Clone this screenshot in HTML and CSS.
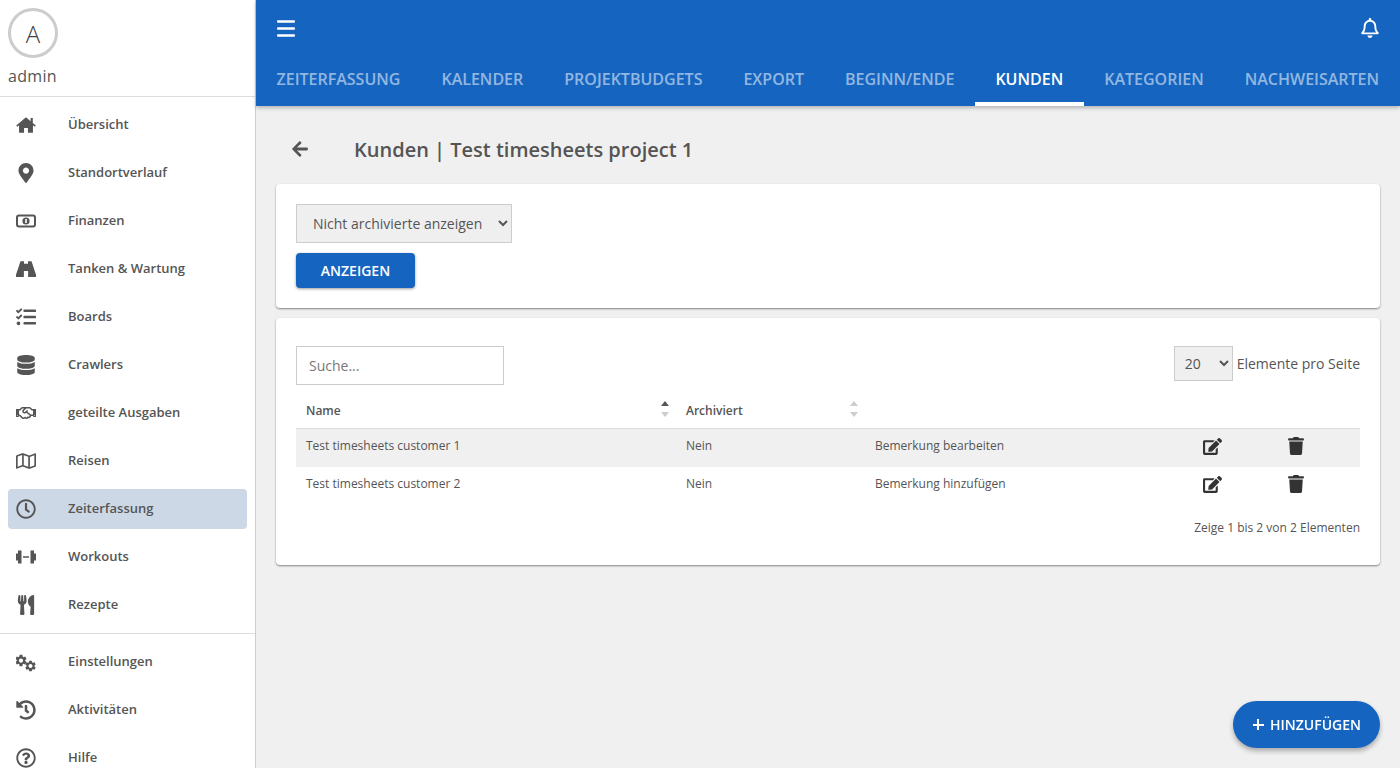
FILE: index.html
```html
<!DOCTYPE html>
<html lang="de">
<head>
<meta charset="UTF-8">
<meta name="viewport" content="width=device-width, initial-scale=1.0">
<title>Kunden</title>
<link rel="stylesheet" href="styles.css">
</head>
<body>

<svg class="sprite" xmlns="http://www.w3.org/2000/svg">
    <symbol id="i-edit" viewBox="0 0 576 512"><path d="M402.6 83.2l90.2 90.2c3.8 3.8 3.8 10 0 13.8L274.4 405.6l-92.8 10.3c-12.4 1.4-22.9-9.1-21.5-21.5l10.3-92.8L388.8 83.2c3.8-3.8 10-3.8 13.8 0zm162-22.9l-48.8-48.8c-15.2-15.2-39.9-15.2-55.2 0l-35.4 35.4c-3.8 3.8-3.8 10 0 13.8l90.2 90.2c3.8 3.8 10 3.8 13.8 0l35.4-35.4c15.2-15.3 15.2-40 0-55.2zM384 346.2V448H64V128h229.8c3.2 0 6.2-1.3 8.5-3.5l40-40c7.6-7.6 2.2-20.5-8.5-20.5H48C21.5 64 0 85.5 0 112v352c0 26.5 21.5 48 48 48h352c26.5 0 48-21.5 48-48V306.2c0-10.7-12.9-16-20.5-8.5l-40 40c-2.2 2.3-3.5 5.3-3.5 8.5z"/></symbol>
    <symbol id="i-trash" viewBox="0 0 448 512"><path d="M432 32H312l-9.4-18.7A24 24 0 0 0 281.1 0H166.8a23.72 23.72 0 0 0-21.4 13.3L136 32H16A16 16 0 0 0 0 48v32a16 16 0 0 0 16 16h416a16 16 0 0 0 16-16V48a16 16 0 0 0-16-16zM53.2 467a48 48 0 0 0 47.9 45h245.8a48 48 0 0 0 47.9-45L416 128H32z"/></symbol>
    <symbol id="i-gear" viewBox="0 0 24 24"><path d="M19.14 12.94c.04-.3.06-.61.06-.94 0-.32-.02-.64-.07-.94l2.03-1.58c.18-.14.23-.41.12-.61l-1.92-3.32c-.12-.22-.37-.29-.59-.22l-2.39.96c-.5-.38-1.03-.7-1.62-.94l-.36-2.54c-.04-.24-.24-.41-.48-.41h-3.84c-.24 0-.43.17-.47.41l-.36 2.54c-.59.24-1.13.57-1.62.94l-2.39-.96c-.22-.08-.47 0-.59.22L2.74 8.87c-.12.21-.08.47.12.61l2.03 1.58c-.05.3-.09.63-.09.94s.02.64.07.94l-2.03 1.58c-.18.14-.23.41-.12.61l1.92 3.32c.12.22.37.29.59.22l2.39-.96c.5.38 1.03.7 1.62.94l.36 2.54c.05.24.24.41.48.41h3.84c.24 0 .44-.17.47-.41l.36-2.54c.59-.24 1.13-.56 1.62-.94l2.39.96c.22.08.47 0 .59-.22l1.92-3.32c.12-.22.07-.47-.12-.61l-2.01-1.58zM12 15.6c-1.98 0-3.6-1.62-3.6-3.6s1.62-3.6 3.6-3.6 3.6 1.62 3.6 3.6-1.62 3.6-3.6 3.6z"/></symbol>
</svg>

<div class="app">

    <aside class="sidebar">
        <div class="profile">
            <div class="avatar">A</div>
            <div class="username">admin</div>
        </div>

        <nav class="menu">
            <a class="menu-item">
                <svg class="menu-icon" viewBox="0 0 576 512"><path d="M288 36L420 145V52H484V198L570 270L540 304L488 262V480H344V340H232V480H88V262L36 304L6 270Z"/></svg>
                <span>Übersicht</span>
            </a>
            <a class="menu-item">
                <svg class="menu-icon" viewBox="0 0 384 512"><path d="M172.268 501.67C26.97 291.031 0 269.413 0 192 0 85.961 85.961 0 192 0s192 85.961 192 192c0 77.413-26.97 99.031-172.268 309.67-9.535 13.774-29.93 13.773-39.464 0zM192 272c44.183 0 80-35.817 80-80s-35.817-80-80-80-80 35.817-80 80 35.817 80 80 80z"/></svg>
                <span>Standortverlauf</span>
            </a>
            <a class="menu-item">
                <svg class="menu-icon" viewBox="0 0 20 20">
                    <rect x="1" y="4.5" width="18" height="11" rx="2" fill="none" stroke="#555" stroke-width="2"/>
                    <circle cx="10" cy="10" r="3.6"/>
                    <rect x="9.2" y="8" width="1.6" height="4" fill="#fff"/>
                </svg>
                <span>Finanzen</span>
            </a>
            <a class="menu-item">
                <svg class="menu-icon" viewBox="0 0 512 512"><path d="M115 60H205V120H307V60H397L512 400V460H310V310H202V460H0V400Z"/></svg>
                <span>Tanken &amp; Wartung</span>
            </a>
            <a class="menu-item">
                <svg class="menu-icon" viewBox="0 0 512 512"><path d="M139.61 35.5a12 12 0 0 0-17 0L58.93 98.81l-22.7-22.12a12 12 0 0 0-17 0L3.53 92.41a12 12 0 0 0 0 17l47.59 47.4a12.78 12.78 0 0 0 17.61 0l15.59-15.62L156.52 69a12.09 12.09 0 0 0 .09-17zm0 159.19a12 12 0 0 0-17 0l-63.68 63.72-22.7-22.1a12 12 0 0 0-17 0L3.53 252a12 12 0 0 0 0 17L51 316.5a12.77 12.77 0 0 0 17.6 0l15.7-15.69 72.2-72.22a12 12 0 0 0 .09-16.9zM64 368c-26.49 0-48.59 21.5-48.59 48S37.53 464 64 464a48 48 0 0 0 0-96zm432 16H208a16 16 0 0 0-16 16v32a16 16 0 0 0 16 16h288a16 16 0 0 0 16-16v-32a16 16 0 0 0-16-16zm0-320H208a16 16 0 0 0-16 16v32a16 16 0 0 0 16 16h288a16 16 0 0 0 16-16V80a16 16 0 0 0-16-16zm0 160H208a16 16 0 0 0-16 16v32a16 16 0 0 0 16 16h288a16 16 0 0 0 16-16v-32a16 16 0 0 0-16-16z"/></svg>
                <span>Boards</span>
            </a>
            <a class="menu-item">
                <svg class="menu-icon" viewBox="0 0 448 512"><path d="M448 73.143v45.714C448 159.143 347.667 192 224 192S0 159.143 0 118.857V73.143C0 32.857 100.333 0 224 0s224 32.857 224 73.143zM448 176v102.857C448 319.143 347.667 352 224 352S0 319.143 0 278.857V176c48.125 33.143 136.208 48.572 224 48.572S399.874 209.143 448 176zm0 160v102.857C448 479.143 347.667 512 224 512S0 479.143 0 438.857V336c48.125 33.143 136.208 48.572 224 48.572S399.874 369.143 448 336z"/></svg>
                <span>Crawlers</span>
            </a>
            <a class="menu-item">
                <svg class="menu-icon" viewBox="0 0 640 512"><path d="M519.2 127.9l-47.6-47.6A56.252 56.252 0 0 0 432 64H205.2c-14.8 0-29.1 5.9-39.6 16.3L118 127.9H0v255.7h64c17.6 0 31.8-14.2 31.9-31.7h9.1l84.6 76.4c30.9 25.1 73.8 25.7 105.6 3.8 12.5 10.8 26 15.9 41.1 15.9 18.2 0 35.3-7.4 48.8-24 22.1 8.7 48.2 2.6 64-16.8l26.2-32.3c5.6-6.9 9.1-14.8 10.9-23h57.9c.1 17.5 14.4 31.7 31.9 31.7h64V127.9H519.2zM48 351.6c-8.8 0-16-7.2-16-16s7.2-16 16-16 16 7.2 16 16c0 8.9-7.2 16-16 16zm390-6.9l-26.1 32.2c-2.8 3.4-7.8 4-11.3 1.2l-23.9-19.4-30 36.5c-6 7.3-15 4.8-18 2.4l-36.8-31.5-15.6 19.2c-13.9 17.1-39.2 19.7-55.3 6.6l-97.3-88H96V175.8h41.9l61.7-61.6c2-.8 3.7-1.5 5.7-2.3H262l-38.7 35.5c-29.4 26.9-31.1 72.3-4.4 101.3 14.8 16.2 61.2 41.2 101.5 4.4l8.2-7.5 108.2 87.8c3.4 2.8 3.9 7.9 1.2 11.3zm106-40.8h-69.2c-2.3-2.8-4.9-5.4-7.7-7.7l-102.7-83.4 12.5-11.4c6.5-6 7-16.1 1-22.6L367 167.1c-6-6.5-16.1-6.9-22.6-1l-55.2 50.6c-9.5 8.7-25.7 9.4-34.6 0-9.3-9.9-8.5-25.1 1.2-33.9l65.6-60.1c7.4-6.8 17-10.5 27-10.5l83.7-.2c2.1 0 4.1.8 5.5 2.3l61.7 61.6H544v128zm48 47.7c-8.8 0-16-7.2-16-16s7.2-16 16-16 16 7.2 16 16c0 8.9-7.2 16-16 16z"/></svg>
                <span>geteilte Ausgaben</span>
            </a>
            <a class="menu-item">
                <svg class="menu-icon" viewBox="0 0 576 512"><path d="M560.02 32c-1.96 0-3.98.37-5.96 1.16L384.01 96H384L212 35.28A64.252 64.252 0 0 0 191.76 32c-6.69 0-13.37 1.05-19.81 3.14L20.12 87.95A32.006 32.006 0 0 0 0 117.66v346.32C0 473.17 7.53 480 15.99 480c1.96 0 3.97-.37 5.96-1.16L192 416l172 60.71a63.98 63.98 0 0 0 40.05.15l151.83-52.81A31.996 31.996 0 0 0 576 394.34V48.02c0-9.19-7.53-16.02-15.98-16.02zM224 90.42l128 45.19v285.97l-128-45.19V90.42zM48 418.05V129.07l128-44.53v286.2l-.64.23L48 418.05zm480-35.13l-128 44.53V141.26l.64-.24L528 93.95v288.97z"/></svg>
                <span>Reisen</span>
            </a>
            <a class="menu-item active">
                <svg class="menu-icon" viewBox="0 0 512 512"><path d="M256 8C119 8 8 119 8 256s111 248 248 248 248-111 248-248S393 8 256 8zm0 448c-110.5 0-200-89.5-200-200S145.5 56 256 56s200 89.5 200 200-89.5 200-200 200zm61.8-104.4l-84.9-61.7c-3.1-2.3-4.9-5.9-4.9-9.7V116c0-6.6 5.4-12 12-12h32c6.6 0 12 5.4 12 12v141.7l66.8 48.6c5.4 3.9 6.5 11.4 2.6 16.8L334.6 349c-3.9 5.3-11.4 6.5-16.8 2.6z"/></svg>
                <span>Zeiterfassung</span>
            </a>
            <a class="menu-item">
                <svg class="menu-icon" viewBox="0 0 20 20"><path d="M0 6.5H2V3.5H5.5V16.5H2V13.5H0ZM7 9.2H13V10.8H7ZM14.5 3.5H18V6.5H20V13.5H18V16.5H14.5Z"/></svg>
                <span>Workouts</span>
            </a>
            <a class="menu-item">
                <svg class="menu-icon" viewBox="0 0 416 512"><path d="M207.9 15.2c.8 4.7 16.1 94.5 16.1 128.8 0 52.3-27.8 89.6-68.9 104.6L168 486.7c.7 13.7-10.2 25.3-24 25.3H80c-13.7 0-24.7-11.5-24-25.3l12.9-238.1C27.7 233.6 0 196.2 0 144 0 109.6 15.3 19.9 16.1 15.2 19.3-5.1 61.4-5.4 64 16.3v141.2c1.3 3.4 15.1 3.2 16 0 1.4-25.3 7.9-139.2 8-141.8 3.3-20.8 44.7-20.8 47.9 0 .2 2.7 6.6 116.5 8 141.8.9 3.2 14.8 3.4 16 0V16.3c2.6-21.6 44.8-21.4 48-1.1zm119.2 285.7l-15 185.1c-1.2 14 9.9 26 23.9 26h56c13.3 0 24-10.7 24-24V24c0-13.2-10.7-24-24-24-82.5 0-221.4 178.5-64.9 300.9z"/></svg>
                <span>Rezepte</span>
            </a>
        </nav>

        <nav class="menu menu-bottom">
            <a class="menu-item">
                <svg class="menu-icon" viewBox="0 0 24 24"><use href="#i-gear" x="-2.5" y="1.7" width="17" height="17"/><use href="#i-gear" x="9.4" y="8.8" width="16" height="16"/></svg>
                <span>Einstellungen</span>
            </a>
            <a class="menu-item">
                <svg class="menu-icon" viewBox="0 0 512 512"><path d="M504 255.531c.253 136.64-111.18 248.372-247.82 248.468-59.015.042-113.223-20.53-155.822-54.911-11.077-8.94-11.905-25.541-1.839-35.607l11.267-11.267c8.609-8.609 22.353-9.551 31.891-1.984C173.062 425.135 212.781 440 256 440c101.705 0 184-82.311 184-184 0-101.705-82.311-184-184-184-48.814 0-93.149 18.969-126.068 49.932l50.754 50.754c10.08 10.08 2.941 27.314-11.313 27.314H24c-8.837 0-16-7.163-16-16V38.627c0-14.254 17.234-21.393 27.314-11.314l49.372 49.372C129.209 34.136 189.552 8 256 8c136.81 0 247.747 110.78 248 247.531zm-180.912 78.784l9.823-12.63c8.138-10.463 6.253-25.542-4.21-33.679L288 256.349V152c0-13.255-10.745-24-24-24h-16c-13.255 0-24 10.745-24 24v135.651l65.409 50.874c10.463 8.137 25.541 6.253 33.679-4.21z"/></svg>
                <span>Aktivitäten</span>
            </a>
            <a class="menu-item">
                <svg class="menu-icon" viewBox="0 0 512 512"><path d="M256 8C119.043 8 8 119.083 8 256c0 136.997 111.043 248 248 248s248-111.003 248-248C504 119.083 392.957 8 256 8zm0 448c-110.532 0-200-89.431-200-200 0-110.495 89.472-200 200-200 110.491 0 200 89.471 200 200 0 110.53-89.431 200-200 200zm107.244-255.2c0 67.052-72.421 68.084-72.421 92.863V300c0 6.627-5.373 12-12 12h-45.647c-6.627 0-12-5.373-12-12v-8.659c0-35.745 27.1-50.034 47.579-61.516 17.561-9.845 28.324-16.541 28.324-29.579 0-17.246-21.999-28.693-39.784-28.693-23.189 0-33.894 10.977-48.942 29.969-4.057 5.12-11.46 6.071-16.666 2.124l-27.824-21.098c-5.107-3.872-6.251-11.066-2.644-16.363C184.846 131.491 214.94 112 261.794 112c49.071 0 101.45 38.304 101.45 88.8zM298 368c0 23.159-18.841 42-42 42s-42-18.841-42-42 18.841-42 42-42 42 18.841 42 42z"/></svg>
                <span>Hilfe</span>
            </a>
        </nav>
    </aside>

    <div class="main">
        <header class="topbar">
            <div class="toolbar">
                <svg class="icon-bars" viewBox="0 0 18 20">
                    <rect y="2.25" width="18" height="2.5" rx="1"/>
                    <rect y="9.25" width="18" height="2.5" rx="1"/>
                    <rect y="16.25" width="18" height="2.5" rx="1"/>
                </svg>
                <svg class="icon-bell" viewBox="0 0 448 512"><path d="M439.39 362.29c-19.32-20.76-55.47-51.99-55.47-154.29 0-77.7-54.48-139.9-127.94-155.16V32c0-17.67-14.32-32-31.98-32s-31.98 14.33-31.98 32v20.84C118.56 68.1 64.08 130.3 64.08 208c0 102.3-36.15 133.53-55.47 154.29-6 6.45-8.66 14.16-8.61 21.71.11 16.4 12.98 32 32.1 32h383.8c19.12 0 32-15.6 32.1-32 .05-7.55-2.61-15.27-8.61-21.71zM67.53 368c21.22-27.97 44.42-74.33 44.53-159.42 0-.2-.06-.38-.06-.58 0-61.86 50.14-112 112-112s112 50.14 112 112c0 .2-.06.38-.06.58.11 85.1 23.31 131.46 44.53 159.42H67.53zM224 512c35.32 0 63.97-28.65 63.97-64H160.03c0 35.35 28.65 64 63.97 64z"/></svg>
            </div>
            <div class="tabs">
                <a class="tab">ZEITERFASSUNG</a>
                <a class="tab">KALENDER</a>
                <a class="tab">PROJEKTBUDGETS</a>
                <a class="tab">EXPORT</a>
                <a class="tab">BEGINN/ENDE</a>
                <a class="tab active">KUNDEN</a>
                <a class="tab">KATEGORIEN</a>
                <a class="tab">NACHWEISARTEN</a>
            </div>
        </header>

        <main class="content">
            <div class="page-title">
                <svg class="icon-back" viewBox="0 0 448 512"><path d="M257.5 445.1l-22.2 22.2c-9.4 9.4-24.6 9.4-33.9 0L7 273c-9.4-9.4-9.4-24.6 0-33.9L201.4 44.7c9.4-9.4 24.6-9.4 33.9 0l22.2 22.2c9.5 9.5 9.3 25-.4 34.3L136.6 216H424c13.3 0 24 10.7 24 24v32c0 13.3-10.7 24-24 24H136.6l120.5 114.8c9.8 9.3 10 24.8.4 34.3z"/></svg>
                <h1>Kunden | Test timesheets project 1</h1>
            </div>

            <section class="card filter-card">
                <select class="select filter-select">
                    <option>Nicht archivierte anzeigen</option>
                </select>
                <button class="btn">ANZEIGEN</button>
            </section>

            <section class="card list-card">
                <div class="list-controls">
                    <input class="search" type="text" placeholder="Suche...">
                    <div class="page-size">
                        <select class="select size-select">
                            <option>20</option>
                        </select>
                        <span>Elemente pro Seite</span>
                    </div>
                </div>

                <table class="table">
                    <colgroup>
                        <col class="col-name">
                        <col class="col-archived">
                        <col class="col-note">
                        <col class="col-action">
                        <col class="col-action">
                        <col>
                    </colgroup>
                    <thead>
                        <tr>
                            <th><div class="th-inner">Name<span class="sort sort-up"><i></i><i></i></span></div></th>
                            <th><div class="th-inner">Archiviert<span class="sort"><i></i><i></i></span></div></th>
                            <th></th>
                            <th></th>
                            <th></th>
                            <th></th>
                        </tr>
                    </thead>
                    <tbody>
                        <tr class="odd">
                            <td>Test timesheets customer 1</td>
                            <td>Nein</td>
                            <td>Bemerkung bearbeiten</td>
                            <td class="action"><svg class="icon-edit"><use href="#i-edit"/></svg></td>
                            <td class="action"><svg class="icon-trash"><use href="#i-trash"/></svg></td>
                            <td></td>
                        </tr>
                        <tr>
                            <td>Test timesheets customer 2</td>
                            <td>Nein</td>
                            <td>Bemerkung hinzufügen</td>
                            <td class="action"><svg class="icon-edit"><use href="#i-edit"/></svg></td>
                            <td class="action"><svg class="icon-trash"><use href="#i-trash"/></svg></td>
                            <td></td>
                        </tr>
                    </tbody>
                </table>

                <div class="table-info">Zeige 1 bis 2 von 2 Elementen</div>
            </section>
        </main>
    </div>

</div>

<button class="fab"><span class="fab-plus"></span>HINZUFÜGEN</button>

</body>
</html>
```

FILE: styles.css
```css
* {
    box-sizing: border-box;
}

html,
body {
    height: 100%;
}

body {
    margin: 0;
    overflow: hidden;
    font-family: "Open Sans", sans-serif;
    color: #555;
    background-color: #f0f0f0;
}

.sprite {
    display: none;
}

.app {
    display: flex;
    height: 100vh;
}

/* sidebar */

.sidebar {
    flex: 0 0 256px;
    height: 100vh;
    overflow: hidden;
    background-color: white;
    border-right: 1px solid #c6cfdc;
}

.profile {
    height: 97px;
    padding: 8px 8px 0;
    border-bottom: 1px solid #ddd;
}

.avatar {
    width: 50px;
    height: 50px;
    border: 3px solid #ccc;
    border-radius: 50%;
    display: flex;
    align-items: center;
    justify-content: center;
    font-size: 24px;
    font-weight: 300;
    color: #444;
}

.username {
    margin-top: 6px;
    font-size: 16px;
    line-height: 24px;
    letter-spacing: 0.3px;
}

.menu {
    padding: 8px 8px 0;
}

.menu-bottom {
    border-top: 1px solid #ddd;
}

.menu-item {
    display: flex;
    align-items: center;
    height: 40px;
    margin-bottom: 8px;
    padding-left: 8px;
    border-radius: 4px;
    font-size: 13px;
    font-weight: 600;
    color: #555;
}

.menu-item span {
    padding-bottom: 2px;
}

.menu-item.active {
    background-color: #cdd8e6;
}

.menu-icon {
    flex: 0 0 20px;
    width: 20px;
    height: 20px;
    margin-right: 32px;
    fill: #555;
}

/* top bar */

.main {
    flex: 1;
    min-width: 0;
    display: flex;
    flex-direction: column;
}

.topbar {
    height: 106px;
    background-color: #1565c0;
    box-shadow: 0 2px 4px rgba(0, 0, 0, 0.25);
    position: relative;
}

.toolbar {
    display: flex;
    justify-content: space-between;
    align-items: center;
    height: 55px;
    padding: 0 21px;
}

.icon-bars {
    width: 18px;
    height: 20px;
    fill: white;
}

.icon-bell {
    width: 18px;
    height: 20px;
    fill: white;
}

.tabs {
    display: flex;
    height: 51px;
}

.tab {
    display: flex;
    align-items: center;
    padding: 0 20.5px;
    font-size: 16px;
    font-weight: 600;
    color: rgba(255, 255, 255, 0.55);
    border-bottom: 4px solid transparent;
    white-space: nowrap;
}

.tab.active {
    color: white;
    border-bottom-color: white;
}

/* content */

.content {
    flex: 1;
    padding: 0 20px;
}

.page-title {
    display: flex;
    align-items: center;
    height: 78px;
    padding: 8px 0 0 15px;
}

.icon-back {
    width: 18px;
    height: 18px;
    margin-right: 45px;
    fill: #555;
}

h1 {
    margin: 0;
    font-size: 20px;
    font-weight: 600;
    color: #555;
}

.card {
    background-color: white;
    border-radius: 4px;
    box-shadow: 0 1px 2px rgba(0, 0, 0, 0.45);
    padding: 20px;
}

.filter-card {
    display: flex;
    flex-direction: column;
    align-items: flex-start;
    height: 124px;
    margin-bottom: 10px;
}

.select {
    font-family: "Open Sans", sans-serif;
    font-size: 14px;
    color: #555;
    background-color: #efefef;
    border: 1px solid #ccc;
    border-radius: 0;
}

.filter-select {
    width: 216px;
    height: 39px;
    padding: 0 12px;
    margin-bottom: 10px;
}

.btn {
    width: 119px;
    height: 35px;
    border: none;
    border-radius: 4px;
    font-family: "Open Sans", sans-serif;
    font-size: 14px;
    font-weight: 600;
    color: white;
    background-color: #1565c0;
    box-shadow: 0 1px 3px rgba(0, 0, 0, 0.4);
}

.list-card {
    height: 247px;
    padding-top: 28px;
}

.list-controls {
    display: flex;
    justify-content: space-between;
    align-items: flex-start;
    height: 39px;
}

.search {
    width: 208px;
    height: 39px;
    padding: 0 12px;
    border: 1px solid #ccc;
    font-family: "Open Sans", sans-serif;
    font-size: 14px;
    color: #555;
}

.search::placeholder {
    color: #777;
}

.page-size {
    display: flex;
    align-items: center;
    gap: 4px;
    font-size: 14px;
}

.size-select {
    width: 59px;
    height: 35px;
    padding: 0 6px;
}

/* table */

.table {
    width: 100%;
    table-layout: fixed;
    border-collapse: collapse;
    font-size: 12px;
}

.col-name {
    width: 380px;
}

.col-archived {
    width: 189px;
}

.col-note {
    width: 306px;
}

.col-action {
    width: 83px;
}

th {
    height: 43px;
    padding: 9px 7px 0 10px;
    text-align: left;
    font-weight: 600;
    border-bottom: 1px solid #ddd;
}

.th-inner {
    display: flex;
    justify-content: space-between;
    align-items: center;
}

.sort {
    display: flex;
    flex-direction: column;
    gap: 6px;
    margin-top: -3px;
}

.sort i {
    display: block;
    width: 0;
    height: 0;
    border-left: 4px solid transparent;
    border-right: 4px solid transparent;
    border-bottom: 5px solid #ccc;
}

.sort i:last-child {
    border-bottom: none;
    border-top: 5px solid #ccc;
}

.sort-up i:first-child {
    border-bottom-color: #555;
}

td {
    height: 37px;
    padding: 0 10px 5px;
    color: #555;
}

tr.odd td {
    height: 39px;
    background-color: #f0f0f0;
}

.action {
    padding: 0 0 3px;
    text-align: center;
}

.action svg {
    display: block;
    margin: 0 auto;
    fill: #333;
}

.icon-edit {
    width: 19px;
    height: 17px;
}

.icon-trash {
    width: 16px;
    height: 18px;
}

.table-info {
    margin-top: 15px;
    text-align: right;
    font-size: 12px;
    line-height: 18px;
}

/* add button */

.fab {
    position: fixed;
    right: 20px;
    bottom: 20px;
    display: flex;
    align-items: center;
    justify-content: center;
    gap: 6px;
    width: 147px;
    height: 47px;
    padding: 0 0 0 1px;
    border: none;
    border-radius: 24px;
    font-family: "Open Sans", sans-serif;
    font-size: 14px;
    font-weight: 600;
    color: white;
    background-color: #1565c0;
    box-shadow: 0 3px 5px rgba(0, 0, 0, 0.3);
}

.fab-plus {
    width: 11px;
    height: 11px;
    background:
        linear-gradient(white, white) center / 11px 2px no-repeat,
        linear-gradient(white, white) center / 2px 11px no-repeat;
}
```
